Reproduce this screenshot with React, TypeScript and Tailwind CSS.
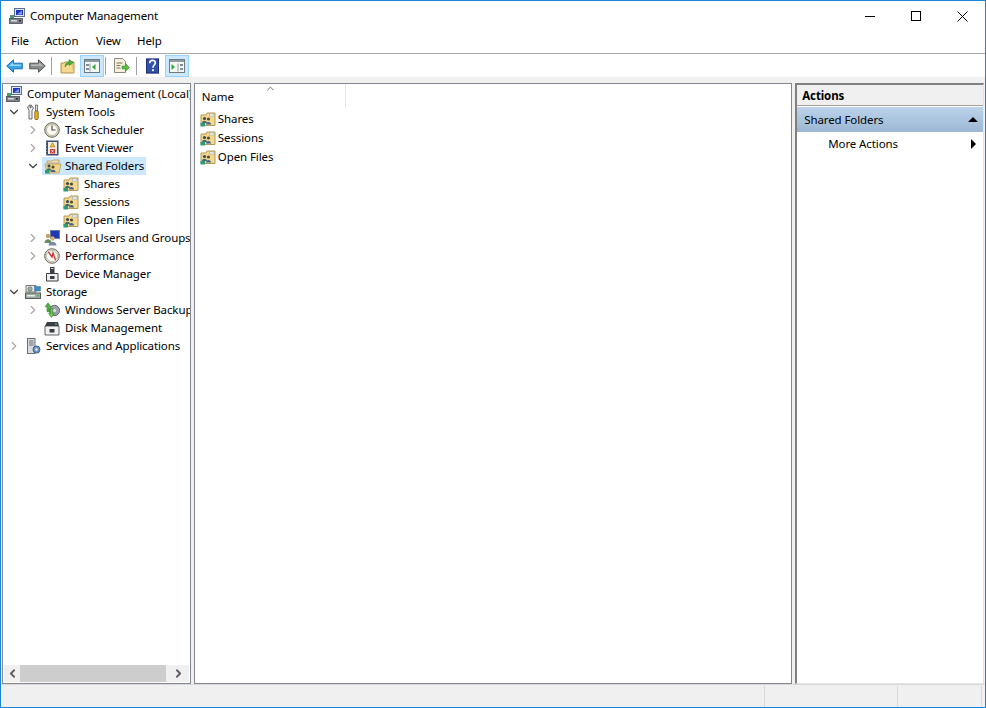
import React from 'react';
import { ChevronRight, ChevronDown, ChevronLeft, ChevronUp } from 'lucide-react';

const PcIcon = () => (
  <svg width="16" height="16" viewBox="0 0 16 16" className="shrink-0">
    <rect x="5.500" y="0.500" width="10" height="8" fill="#dfe6f2" stroke="#5c6f8c" />
    <rect x="7" y="2" width="7" height="5" fill="#2036b8" />
    <path d="M8 6.500l5-4v4z" fill="#7f9cf0" />
    <rect x="1" y="7" width="4" height="4" fill="#4e9a6a" />
    <rect x="0.500" y="10.500" width="13" height="5" fill="#7a7f88" stroke="#4b4f57" strokeWidth="0.8" />
    <rect x="2" y="12" width="6" height="1.500" fill="#d6d9de" />
    <rect x="10" y="12" width="2" height="1.500" fill="#2b2f36" />
  </svg>
);

const ShareIcon = () => (
  <svg width="16" height="16" viewBox="0 0 16 16" className="shrink-0">
    <path d="M1 4h5l1-2h8v12.500H1z" fill="#f3d88f" stroke="#b69a55" />
    <rect x="9.500" y="3" width="4.500" height="2" fill="#ffffff" stroke="#8fa9c9" strokeWidth="0.6" />
    <circle cx="4.500" cy="7.500" r="1.600" fill="#3d4a55" />
    <path d="M2 12c0-3 5-3 5 0z" fill="#3f6f6a" />
    <circle cx="8.500" cy="8" r="1.600" fill="#5b4a2a" />
    <path d="M6 13.500c0-3.500 5-3.500 5 0z" fill="#4a5f88" />
    <rect x="0.500" y="12" width="4.500" height="3.500" fill="#2f9a78" />
  </svg>
);

const SharedOpenIcon = () => (
  <svg width="18" height="16" viewBox="0 0 18 16" className="shrink-0">
    <path d="M3 3h5l1-1h6v3H3z" fill="#efe2ba" stroke="#ad9a68" strokeWidth="0.8" />
    <path d="M1 6h16l-2 9H3z" fill="#f0d58b" stroke="#b69a55" strokeWidth="0.8" />
    <circle cx="5" cy="8" r="1.600" fill="#3d4a55" />
    <path d="M2.500 12.500c0-3 5-3 5 0z" fill="#3f6f6a" />
    <circle cx="9" cy="9" r="1.600" fill="#5b4a2a" />
    <path d="M6.500 14c0-3 5-3 5 0z" fill="#4a5f88" />
    <rect x="1" y="12" width="4.500" height="3.500" fill="#2f9a78" />
  </svg>
);

const ToolsIcon = () => (
  <svg width="16" height="16" viewBox="0 0 16 16" className="shrink-0">
    <path d="M5 .8L2.500 3l1.500 3.500v8.500h3V6.500L8.500 4 6 .8v3H5z" fill="#f0f0f0" stroke="#55585f" strokeWidth="0.9" />
    <path d="M10.500 1h2v6h-2z" fill="#e6e6e6" stroke="#55585f" strokeWidth="0.8" />
    <rect x="9.800" y="7" width="3.400" height="8.500" rx="1" fill="#e8b21d" stroke="#7a5c0c" strokeWidth="0.8" />
  </svg>
);

const ClockIcon = () => (
  <svg width="16" height="16" viewBox="0 0 16 16" className="shrink-0">
    <circle cx="8" cy="8" r="7.300" fill="#d8d0b8" stroke="#6e6c62" />
    <circle cx="8" cy="8" r="5.500" fill="#fbf9f0" stroke="#a8a48f" strokeWidth="0.6" />
    <path d="M8 3.500V8h3.500" fill="none" stroke="#444a55" strokeWidth="1.200" />
  </svg>
);

const EventIcon = () => (
  <svg width="16" height="16" viewBox="0 0 16 16" className="shrink-0">
    <rect x="2" y="0.500" width="12.500" height="15" fill="#3f5078" />
    <path d="M2 2v1M2 5v1M2 8v1M2 11v1M2 14v1" stroke="#e5e5e5" />
    <rect x="4" y="2" width="9" height="12" fill="#f0eee6" />
    <path d="M8.500 2.500l2.500 4.500H6z" fill="#f2c230" stroke="#8f6d12" strokeWidth="0.5" />
    <rect x="6" y="9" width="5" height="4.500" fill="#cf3b3b" />
    <path d="M7.500 10l2 2.500M9.500 10l-2 2.500" stroke="#fff" strokeWidth="0.7" />
  </svg>
);

const UsersIcon = () => (
  <svg width="16" height="16" viewBox="0 0 16 16" className="shrink-0">
    <rect x="6.500" y="0.500" width="9" height="8" fill="#2036b8" stroke="#6b7fa6" />
    <circle cx="4" cy="6" r="2.200" fill="#c9a06a" />
    <path d="M0.500 13c0-5 7-5 7 0z" fill="#5f8f55" />
    <circle cx="8.500" cy="8.500" r="2.200" fill="#d7b07c" />
    <path d="M4.500 15.500c0-5 8-5 8 0z" fill="#7d8aa3" />
  </svg>
);

const PerfIcon = () => (
  <svg width="16" height="16" viewBox="0 0 16 16" className="shrink-0">
    <circle cx="8" cy="8" r="7.300" fill="#e0dccf" stroke="#6e6c62" />
    <circle cx="8" cy="8" r="5.500" fill="#ffffff" stroke="#a8a48f" strokeWidth="0.6" />
    <path d="M4.500 4l3.500 5 1-4 2.500 7" fill="none" stroke="#c8362f" strokeWidth="1.400" />
  </svg>
);

const DeviceIcon = () => (
  <svg width="16" height="16" viewBox="0 0 16 16" className="shrink-0">
    <rect x="6" y="1" width="4.500" height="6" fill="#3a3e45" />
    <rect x="7" y="2" width="2.500" height="1" fill="#d8d8d8" />
    <path d="M2.500 7.500h11.500v7.500H2.500z" fill="#f0f0f0" stroke="#3a3e45" />
    <rect x="6" y="10" width="4.500" height="3" fill="#3a3e45" />
  </svg>
);

const StorageIcon = () => (
  <svg width="16" height="16" viewBox="0 0 16 16" className="shrink-0">
    <path d="M1 1.500h10V8H1z" fill="#e6e9e4" stroke="#59605a" strokeWidth="0.8" />
    <circle cx="5" cy="5" r="2.200" fill="#9db0a8" stroke="#59605a" strokeWidth="0.6" />
    <rect x="9.500" y="2.500" width="6" height="4.500" fill="#2f8fd6" stroke="#5a7590" strokeWidth="0.6" />
    <rect x="0.500" y="9" width="15" height="5.500" fill="#9ea8a0" stroke="#59605a" />
    <rect x="2" y="11" width="8" height="1.500" fill="#e8ede8" />
    <rect x="12" y="11" width="2" height="1.500" fill="#4fbe5a" />
  </svg>
);

const BackupIcon = () => (
  <svg width="16" height="16" viewBox="0 0 16 16" className="shrink-0">
    <circle cx="10.500" cy="8.500" r="5.200" fill="#9aa1aa" stroke="#4c535c" strokeWidth="0.8" />
    <circle cx="10.500" cy="8.500" r="1.500" fill="#e5e5e5" />
    <path d="M4 .8l3 4H5.200v5H3v-5H1z" fill="#4db23f" stroke="#2a7a22" strokeWidth="0.5" />
    <path d="M7.500 15.500l-3-4h2V6.500h2.200v5h1.800z" fill="#6cc94f" stroke="#2a7a22" strokeWidth="0.5" />
  </svg>
);

const DiskIcon = () => (
  <svg width="16" height="16" viewBox="0 0 16 16" className="shrink-0">
    <path d="M3 2h11l1 4H1z" fill="#3a3e45" />
    <rect x="11" y="3.500" width="2" height="1" fill="#5ecb6a" />
    <path d="M1 6h14v9H1z" fill="#f2f2f2" stroke="#3a3e45" strokeWidth="0.8" />
    <rect x="5.500" y="9" width="5" height="3.500" fill="#3a3e45" />
  </svg>
);

const ServicesIcon = () => (
  <svg width="16" height="16" viewBox="0 0 16 16" className="shrink-0">
    <rect x="2.500" y="0.500" width="7.500" height="15" fill="#d7dadf" stroke="#6b7078" />
    <path d="M4 3h4.500M4 5h4.500M4 7h4.500" stroke="#6b7078" />
    <circle cx="11.500" cy="11.500" r="3.500" fill="#6d94c4" stroke="#3f5f8c" />
    <circle cx="11.500" cy="11.500" r="1.200" fill="#e5edf7" />
  </svg>
);

const BackIcon = () => (
  <svg width="17" height="14" viewBox="0 0 17 14">
    <path d="M.7 7L7.500.8v3.400h8.800v5.600H7.500v3.400z" fill="#37a5ee" stroke="#1d6fb5" />
    <path d="M3 7l4-3.500v2h8V7z" fill="#9ad6fa" />
  </svg>
);

const ForwardIcon = () => (
  <svg width="17" height="14" viewBox="0 0 17 14">
    <path d="M16.300 7L9.500.8v3.400H.7v5.600h8.800v3.400z" fill="#8b8d8c" stroke="#555756" />
    <path d="M2 5.500h8v-2L14 7H2z" fill="#b9bbba" />
  </svg>
);

const UpFolderIcon = () => (
  <svg width="16" height="16" viewBox="0 0 16 16">
    <path d="M1 5h3l1-1h9v11H1z" fill="#f3d88f" stroke="#b09150" />
    <path d="M14 15l-2-9H5" fill="none" stroke="#e0bd6c" />
    <path d="M5 9c0-3 2-5 4-5V1.500L13.500 4.500 9 7.500V6C7.500 6 6.500 7 5 9z" fill="#46b03c" stroke="#2b7d24" strokeWidth="0.5" />
  </svg>
);

const PaneIcon = ({ side }: { side: 'left' | 'right' }) => (
  <svg width="16" height="14" viewBox="0 0 16 14">
    <rect x="0.500" y="0.500" width="15" height="13" fill="#f5f7f7" stroke="#6f7a7f" />
    <rect x="1" y="1" width="14" height="2" fill="#8f9ba0" />
    {side === 'left' ? (
      <>
        <rect x="2" y="5" width="3" height="2" fill="#7f8c92" />
        <rect x="2" y="9" width="3" height="2" fill="#7f8c92" />
        <path d="M6 4.500v8" stroke="#8f9ba0" />
        <path d="M11.500 5v6L8 8z" fill="#2fa83a" />
      </>
    ) : (
      <>
        <path d="M2.500 5v6L6 8z" fill="#2fa83a" />
        <path d="M9 4.500v8" stroke="#8f9ba0" />
        <rect x="11" y="5" width="3" height="2" fill="#7f8c92" />
        <rect x="11" y="9" width="3" height="2" fill="#7f8c92" />
      </>
    )}
  </svg>
);

const ExportIcon = () => (
  <svg width="17" height="16" viewBox="0 0 17 16">
    <path d="M1.500.500h8l3 3v11h-11z" fill="#f6f1dc" stroke="#8d8a78" />
    <path d="M3.500 5h6M3.500 7.500h4M3.500 10h4" stroke="#77756a" />
    <path d="M9 8h3.500V5.500L16.500 9.500l-4 4V11H9z" fill="#58bd43" stroke="#2f8a25" strokeWidth="0.5" />
  </svg>
);

const HelpIcon = () => (
  <svg width="13" height="16" viewBox="0 0 14 16">
    <rect width="14" height="16" fill="#3350a8" />
    <rect x="0.500" y="0.500" width="13" height="15" fill="none" stroke="#1f2f78" />
    <path d="M4 5c0-4 6-4 6-.5C10 7 7.500 7 7.500 10" fill="none" stroke="#ffffff" strokeWidth="1.800" />
    <rect x="6.500" y="11.500" width="2" height="2" fill="#ffffff" />
  </svg>
);

type TreeRow = {
  label: string;
  icon: React.ReactNode;
  indent: string;
  arrow?: 'open' | 'closed' | 'none';
  selected?: boolean;
};

const treeRows: TreeRow[] = [
  { label: 'Computer Management (Local)', icon: <PcIcon />, indent: 'pl-[3px]' },
  { label: 'System Tools', icon: <ToolsIcon />, indent: 'pl-[4px]', arrow: 'open' },
  { label: 'Task Scheduler', icon: <ClockIcon />, indent: 'pl-[23px]', arrow: 'closed' },
  { label: 'Event Viewer', icon: <EventIcon />, indent: 'pl-[23px]', arrow: 'closed' },
  { label: 'Shared Folders', icon: <SharedOpenIcon />, indent: 'pl-[23px]', arrow: 'open', selected: true },
  { label: 'Shares', icon: <ShareIcon />, indent: 'pl-[42px]', arrow: 'none' },
  { label: 'Sessions', icon: <ShareIcon />, indent: 'pl-[42px]', arrow: 'none' },
  { label: 'Open Files', icon: <ShareIcon />, indent: 'pl-[42px]', arrow: 'none' },
  { label: 'Local Users and Groups', icon: <UsersIcon />, indent: 'pl-[23px]', arrow: 'closed' },
  { label: 'Performance', icon: <PerfIcon />, indent: 'pl-[23px]', arrow: 'closed' },
  { label: 'Device Manager', icon: <DeviceIcon />, indent: 'pl-[23px]', arrow: 'none' },
  { label: 'Storage', icon: <StorageIcon />, indent: 'pl-[4px]', arrow: 'open' },
  { label: 'Windows Server Backup', icon: <BackupIcon />, indent: 'pl-[23px]', arrow: 'closed' },
  { label: 'Disk Management', icon: <DiskIcon />, indent: 'pl-[23px]', arrow: 'none' },
  { label: 'Services and Applications', icon: <ServicesIcon />, indent: 'pl-[4px]', arrow: 'closed' },
];

const Tree = ({ row }: { row: TreeRow }) => (
  <div className={`flex h-[18px] items-center whitespace-nowrap ${row.indent}`}>
    {row.arrow && (
      <span className="flex w-[18px] shrink-0 justify-center pr-[4px]">
        {row.arrow === 'open' && <ChevronDown size={14} strokeWidth={2} className="text-[#404040]" />}
        {row.arrow === 'closed' && <ChevronRight size={14} strokeWidth={2} className="text-[#a6a6a6]" />}
      </span>
    )}
    <span className={`flex h-[18px] items-center ${row.selected ? '-ml-[2px] bg-[#cce8ff] pl-[2px] pr-[2px]' : ''}`}>
      <span className="flex w-[21px] shrink-0">{row.icon}</span>
      <span>{row.label}</span>
    </span>
  </div>
);

const ToolSep = () => <div className="h-[18px] w-px shrink-0 bg-[#a0a0a0]" />;

const App: React.FC = () => {
  return (
    <div className="flex h-[708px] w-[986px] flex-col overflow-hidden border border-[#1883d7] bg-white font-['Noto_Sans',sans-serif] text-[11.5px] tracking-[-0.1px] text-black">
      {/* Title bar */}
      <div className="flex h-[30px] shrink-0 items-center pl-[8px]">
        <PcIcon />
        <span className="ml-[5px]">Computer Management</span>
        <div className="ml-auto flex items-center">
          <div className="flex w-[46px] justify-center">
            <div className="h-px w-[10px] bg-black" />
          </div>
          <div className="flex w-[46px] justify-center">
            <div className="h-[10px] w-[10px] border border-black" />
          </div>
          <div className="flex w-[46px] justify-center">
            <svg width="11" height="11" viewBox="0 0 11 11">
              <path d="M.5.500l10 10M10.500.500l-10 10" stroke="#000" />
            </svg>
          </div>
        </div>
      </div>

      {/* Menu */}
      <div className="flex h-[23px] shrink-0 items-center border-b border-[#a8a8b0] pb-[2px] pl-[10px]">
        <span className="w-[34px]">File</span>
        <span className="w-[51px]">Action</span>
        <span className="w-[41px]">View</span>
        <span>Help</span>
      </div>

      {/* Toolbar */}
      <div className="flex h-[23px] shrink-0 items-center pl-[5px]">
        <div className="flex w-[23px] shrink-0"><BackIcon /></div>
        <div className="flex w-[22px] shrink-0"><ForwardIcon /></div>
        <ToolSep />
        <div className="ml-[8px] flex w-[20px] shrink-0"><UpFolderIcon /></div>
        <div className="flex h-[22px] w-[24px] shrink-0 items-center justify-center border border-[#99d1ff] bg-[#cce8ff]"><PaneIcon side="left" /></div>
        <div className="ml-px"><ToolSep /></div>
        <div className="ml-[7px] flex w-[23px] shrink-0"><ExportIcon /></div>
        <ToolSep />
        <div className="ml-[9px] flex w-[19px] shrink-0"><HelpIcon /></div>
        <div className="flex h-[22px] w-[24px] shrink-0 items-center justify-center border border-[#99d1ff] bg-[#cce8ff]"><PaneIcon side="right" /></div>
      </div>

      {/* Panes */}
      <div className="flex min-h-0 flex-1 gap-[3px] bg-[#f0f0f0] pt-[6px] pl-px pr-[1px]">
        <div className="flex w-[189px] flex-col overflow-hidden border border-[#828790] bg-white">
          <div className="min-h-0 flex-1 overflow-hidden pt-px">
            {treeRows.map((row) => (
              <Tree key={row.label} row={row} />
            ))}
          </div>
          <div className="mx-px mb-px flex h-[17px] shrink-0 items-center bg-[#f0f0f0]">
            <span className="flex w-[16px] shrink-0 justify-center">
              <ChevronLeft size={13} strokeWidth={3.5} className="text-[#606060]" />
            </span>
            <div className="h-full w-[146px] shrink-0 bg-[#cdcdcd]" />
            <span className="flex flex-1 justify-center pl-[2px]">
              <ChevronRight size={13} strokeWidth={3.5} className="text-[#606060]" />
            </span>
          </div>
        </div>

        <div className="w-[599px] border border-[#828790] bg-white">
          <div className="relative flex h-[24px] w-[151px] items-center border-r border-[#e5e5e5] pl-[7px] pt-[1px]">
            <ChevronUp size={11} strokeWidth={2} className="absolute left-[70px] top-[-1px] text-[#606060]" />
            <span>Name</span>
          </div>
          <div className="pt-px pl-[5px]">
            {['Shares', 'Sessions', 'Open Files'].map((name) => (
              <div key={name} className="flex h-[19px] items-center">
                <span className="flex w-[18px]"><ShareIcon /></span>
                <span>{name}</span>
              </div>
            ))}
          </div>
        </div>

        <div className="flex w-[189px] flex-col border-t-2 border-l-2 border-b border-r border-t-[#808080] border-l-[#808080] border-b-[#e3e3e3] border-r-[#e3e3e3] bg-white">
          <div className="flex h-[21px] shrink-0 items-center border-b border-[#a0a0a0] bg-[#f0f0f0] pl-[5px] pt-[2px] font-bold">Actions</div>
          <div className="mt-px flex h-[25px] shrink-0 items-center justify-between bg-gradient-to-b from-[#bcd3ea] to-[#9cb7d4] pl-[7px] pr-[5px]">
            <span>Shared Folders</span>
            <div className="h-0 w-0 border-x-[5px] border-b-[5px] border-x-transparent border-b-black" />
          </div>
          <div className="flex h-[23px] items-center justify-between pl-[31px] pr-[7px]">
            <span>More Actions</span>
            <div className="h-0 w-0 border-y-[5px] border-l-[5px] border-y-transparent border-l-black" />
          </div>
        </div>
      </div>

      {/* Status bar */}
      <div className="flex h-[23px] shrink-0 justify-end border-t border-[#d9d9d9] bg-[#f0f0f0] pt-px">
        <div className="w-[133px] border-l border-[#d9d9d9]" />
        <div className="w-[85px] border-l border-r border-[#d9d9d9]" />
        <div className="w-[3px]" />
      </div>
    </div>
  );
};

export default App;
